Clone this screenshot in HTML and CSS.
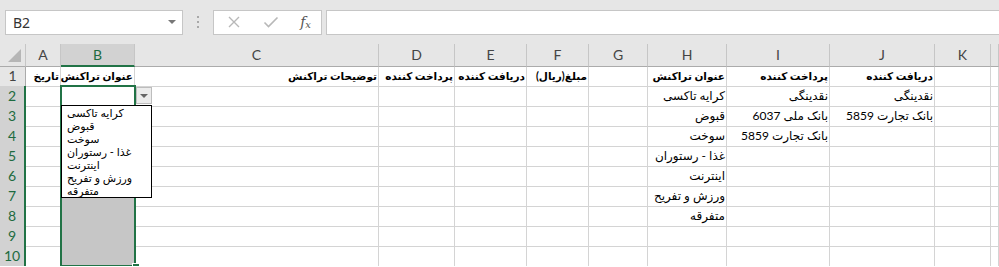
FILE: index.html
```html
<!DOCTYPE html>
<html lang="fa">
  <head>
    <meta charset="UTF-8" />
    <title>Book1 - Excel</title>
    <link rel="stylesheet" href="styles.css">
  </head>
  <body>
    <div class="app">
      <div class="formula-bar">
        <div class="name-box">
          <span>B2</span>
          <span class="caret"></span>
        </div>
        <div class="grip"><i></i><i></i><i></i></div>
        <div class="fx-buttons">
          <svg width="14" height="14" viewBox="0 0 14 14">
            <path d="M2 2 L12 12 M12 2 L2 12" stroke="#b8b8b8" stroke-width="1.4" fill="none" />
          </svg>
          <svg width="16" height="14" viewBox="0 0 16 14">
            <path d="M1.5 7.5 L5.5 11.5 L14.5 2.5" stroke="#b8b8b8" stroke-width="1.6" fill="none" />
          </svg>
          <span class="fx">f<sub>x</sub></span>
        </div>
        <div class="formula-input"></div>
      </div>

      <div class="sheet">
        <div class="row head">
          <div class="corner"><span class="tri"></span></div>
          <div class="ch">A</div>
          <div class="ch on">B</div>
          <div class="ch">C</div>
          <div class="ch">D</div>
          <div class="ch">E</div>
          <div class="ch">F</div>
          <div class="ch">G</div>
          <div class="ch">H</div>
          <div class="ch">I</div>
          <div class="ch">J</div>
          <div class="ch">K</div>
          <div class="ch"></div>
        </div>
        <div class="row bold">
          <div class="rh">1</div>
          <div class="c">تاریخ</div>
          <div class="c">عنوان تراکنش</div>
          <div class="c">توضیحات تراکنش</div>
          <div class="c">پرداخت کننده</div>
          <div class="c">دریافت کننده</div>
          <div class="c">مبلغ(ریال)</div>
          <div class="c"></div>
          <div class="c">عنوان تراکنش</div>
          <div class="c">پرداخت کننده</div>
          <div class="c">دریافت کننده</div>
          <div class="c"></div>
          <div class="c"></div>
        </div>
        <div class="row">
          <div class="rh on">2</div>
          <div class="c"></div>
          <div class="c"></div>
          <div class="c"></div>
          <div class="c"></div>
          <div class="c"></div>
          <div class="c"></div>
          <div class="c"></div>
          <div class="c">کرایه تاکسی</div>
          <div class="c">نقدینگی</div>
          <div class="c">نقدینگی</div>
          <div class="c"></div>
          <div class="c"></div>
        </div>
        <div class="row">
          <div class="rh on">3</div>
          <div class="c"></div>
          <div class="c sel"></div>
          <div class="c"></div>
          <div class="c"></div>
          <div class="c"></div>
          <div class="c"></div>
          <div class="c"></div>
          <div class="c">قبوض</div>
          <div class="c">بانک ملی 6037</div>
          <div class="c">بانک تجارت 5859</div>
          <div class="c"></div>
          <div class="c"></div>
        </div>
        <div class="row">
          <div class="rh on">4</div>
          <div class="c"></div>
          <div class="c sel"></div>
          <div class="c"></div>
          <div class="c"></div>
          <div class="c"></div>
          <div class="c"></div>
          <div class="c"></div>
          <div class="c">سوخت</div>
          <div class="c">بانک تجارت 5859</div>
          <div class="c"></div>
          <div class="c"></div>
          <div class="c"></div>
        </div>
        <div class="row">
          <div class="rh on">5</div>
          <div class="c"></div>
          <div class="c sel"></div>
          <div class="c"></div>
          <div class="c"></div>
          <div class="c"></div>
          <div class="c"></div>
          <div class="c"></div>
          <div class="c">غذا - رستوران</div>
          <div class="c"></div>
          <div class="c"></div>
          <div class="c"></div>
          <div class="c"></div>
        </div>
        <div class="row">
          <div class="rh on">6</div>
          <div class="c"></div>
          <div class="c sel"></div>
          <div class="c"></div>
          <div class="c"></div>
          <div class="c"></div>
          <div class="c"></div>
          <div class="c"></div>
          <div class="c">اینترنت</div>
          <div class="c"></div>
          <div class="c"></div>
          <div class="c"></div>
          <div class="c"></div>
        </div>
        <div class="row">
          <div class="rh on">7</div>
          <div class="c"></div>
          <div class="c sel"></div>
          <div class="c"></div>
          <div class="c"></div>
          <div class="c"></div>
          <div class="c"></div>
          <div class="c"></div>
          <div class="c">ورزش و تفریح</div>
          <div class="c"></div>
          <div class="c"></div>
          <div class="c"></div>
          <div class="c"></div>
        </div>
        <div class="row">
          <div class="rh on">8</div>
          <div class="c"></div>
          <div class="c sel"></div>
          <div class="c"></div>
          <div class="c"></div>
          <div class="c"></div>
          <div class="c"></div>
          <div class="c"></div>
          <div class="c">متفرقه</div>
          <div class="c"></div>
          <div class="c"></div>
          <div class="c"></div>
          <div class="c"></div>
        </div>
        <div class="row">
          <div class="rh on">9</div>
          <div class="c"></div>
          <div class="c sel"></div>
          <div class="c"></div>
          <div class="c"></div>
          <div class="c"></div>
          <div class="c"></div>
          <div class="c"></div>
          <div class="c"></div>
          <div class="c"></div>
          <div class="c"></div>
          <div class="c"></div>
          <div class="c"></div>
        </div>
        <div class="row">
          <div class="rh on">10</div>
          <div class="c"></div>
          <div class="c sel"></div>
          <div class="c"></div>
          <div class="c"></div>
          <div class="c"></div>
          <div class="c"></div>
          <div class="c"></div>
          <div class="c"></div>
          <div class="c"></div>
          <div class="c"></div>
          <div class="c"></div>
          <div class="c"></div>
        </div>

        <!-- selection B2:B10 and the validation list lie over the grid -->
        <div class="selection"></div>
        <div class="fill-handle"></div>
        <div class="list-button"><span class="caret"></span></div>
        <ul class="list">
          <li>کرایه تاکسی</li>
          <li>قبوض</li>
          <li>سوخت</li>
          <li>غذا - رستوران</li>
          <li>اینترنت</li>
          <li>ورزش و تفریح</li>
          <li>متفرقه</li>
        </ul>
      </div>
    </div>
  </body>
</html>
```

FILE: styles.css
```css
body {
  margin: 0;
  background-color: #fff;
  font-family: "Lato", "DejaVu Sans", sans-serif;
  overflow: hidden;
}
.app {
  width: 999px;
}

/* formula bar */
.formula-bar {
  display: flex;
  align-items: center;
  height: 44px;
  padding: 0 0 0 5px;
  background-color: #e6e6e6;
  box-sizing: border-box;
}
.name-box {
  display: flex;
  align-items: center;
  justify-content: space-between;
  width: 178px;
  height: 25px;
  padding: 0 6px 0 7px;
  box-sizing: border-box;
  background-color: #fff;
  border: 1px solid #c6c6c6;
  font-family: "Noto Sans", sans-serif;
  font-size: 14px;
  color: #333;
}
.caret {
  width: 0;
  height: 0;
  border-left: 4px solid transparent;
  border-right: 4px solid transparent;
  border-top: 4px solid #777;
}
.grip {
  display: flex;
  flex-direction: column;
  gap: 3px;
  width: 30px;
  align-items: center;
}
.grip i {
  width: 2px;
  height: 2px;
  background-color: #a8a8a8;
}
.fx-buttons {
  display: flex;
  align-items: center;
  justify-content: space-between;
  width: 109px;
  height: 25px;
  padding: 0 10px 0 13px;
  box-sizing: border-box;
  background-color: #fff;
  border: 1px solid #c6c6c6;
}
.fx {
  font-family: "DejaVu Serif", serif;
  font-style: italic;
  font-size: 14px;
  color: #555;
}
.fx sub {
  font-size: 10px;
  vertical-align: -1px;
}
.formula-input {
  flex: 1;
  height: 25px;
  margin-left: 4px;
  box-sizing: border-box;
  background-color: #fff;
  border: 1px solid #c6c6c6;
  border-right: none;
}

/* grid */
.sheet {
  position: relative;
}
.row {
  display: grid;
  grid-template-columns: 26px 35px 74px 244px 76px 72px 62px 59px 79px 103px 105px 56px 1fr;
  height: 20px;
}
.row.head {
  height: 22px;
  background-color: #e6e6e6;
}
.corner,
.ch {
  position: relative;
  box-sizing: border-box;
  border-right: 1px solid #c6c6c6;
  border-bottom: 1px solid #ababab;
  font-size: 14px;
  line-height: 21px;
  text-align: center;
  color: #444;
}
.ch.on {
  background-color: #d2d2d2;
  border-bottom: 2px solid #217346;
  color: #1d6b40;
}
.tri {
  position: absolute;
  right: 4px;
  bottom: 4px;
  width: 0;
  height: 0;
  border-left: 13px solid transparent;
  border-bottom: 13px solid #b6b6b6;
}
.rh {
  box-sizing: border-box;
  background-color: #e6e6e6;
  border-right: 1px solid #ababab;
  border-bottom: 1px solid #c6c6c6;
  font-size: 14px;
  line-height: 20px;
  text-align: center;
  color: #444;
}
.rh.on {
  background-color: #d2d2d2;
  border-right: 2px solid #217346;
  color: #1d6b40;
}
.c {
  box-sizing: border-box;
  border-right: 1px solid #d4d4d4;
  border-bottom: 1px solid #d4d4d4;
  padding: 0 1px;
  direction: rtl;
  text-align: right;
  white-space: nowrap;
  overflow: hidden;
  font-size: 12px;
  line-height: 20px;
  color: #000;
}
.bold .c {
  font-weight: bold;
  font-size: 10.5px;
}
.c.sel {
  background-color: #c6c6c6;
  border-bottom-color: #d8d8d8;
}

.selection {
  position: absolute;
  left: 60px;
  top: 41px;
  width: 76px;
  height: 182px;
  box-sizing: border-box;
  border: 2px solid #217346;
  pointer-events: none;
}
.fill-handle {
  position: absolute;
  left: 132px;
  top: 219px;
  width: 6px;
  height: 6px;
  background-color: #217346;
  border: 1px solid #fff;
}
.list-button {
  position: absolute;
  left: 136px;
  top: 43px;
  width: 16px;
  height: 17px;
  box-sizing: border-box;
  display: flex;
  align-items: center;
  justify-content: center;
  background-color: #ececec;
  border: 1px solid #bdbdbd;
}
.list-button .caret {
  border-top-color: #666;
}
.list {
  position: absolute;
  left: 61px;
  top: 61px;
  width: 91px;
  height: 93px;
  box-sizing: border-box;
  margin: 0;
  padding: 0 0 0 5px;
  list-style: none;
  background-color: #fff;
  border: 1px solid #000;
}
.list li {
  direction: rtl;
  text-align: left;
  font-size: 11px;
  line-height: 13px;
  white-space: nowrap;
}
```
